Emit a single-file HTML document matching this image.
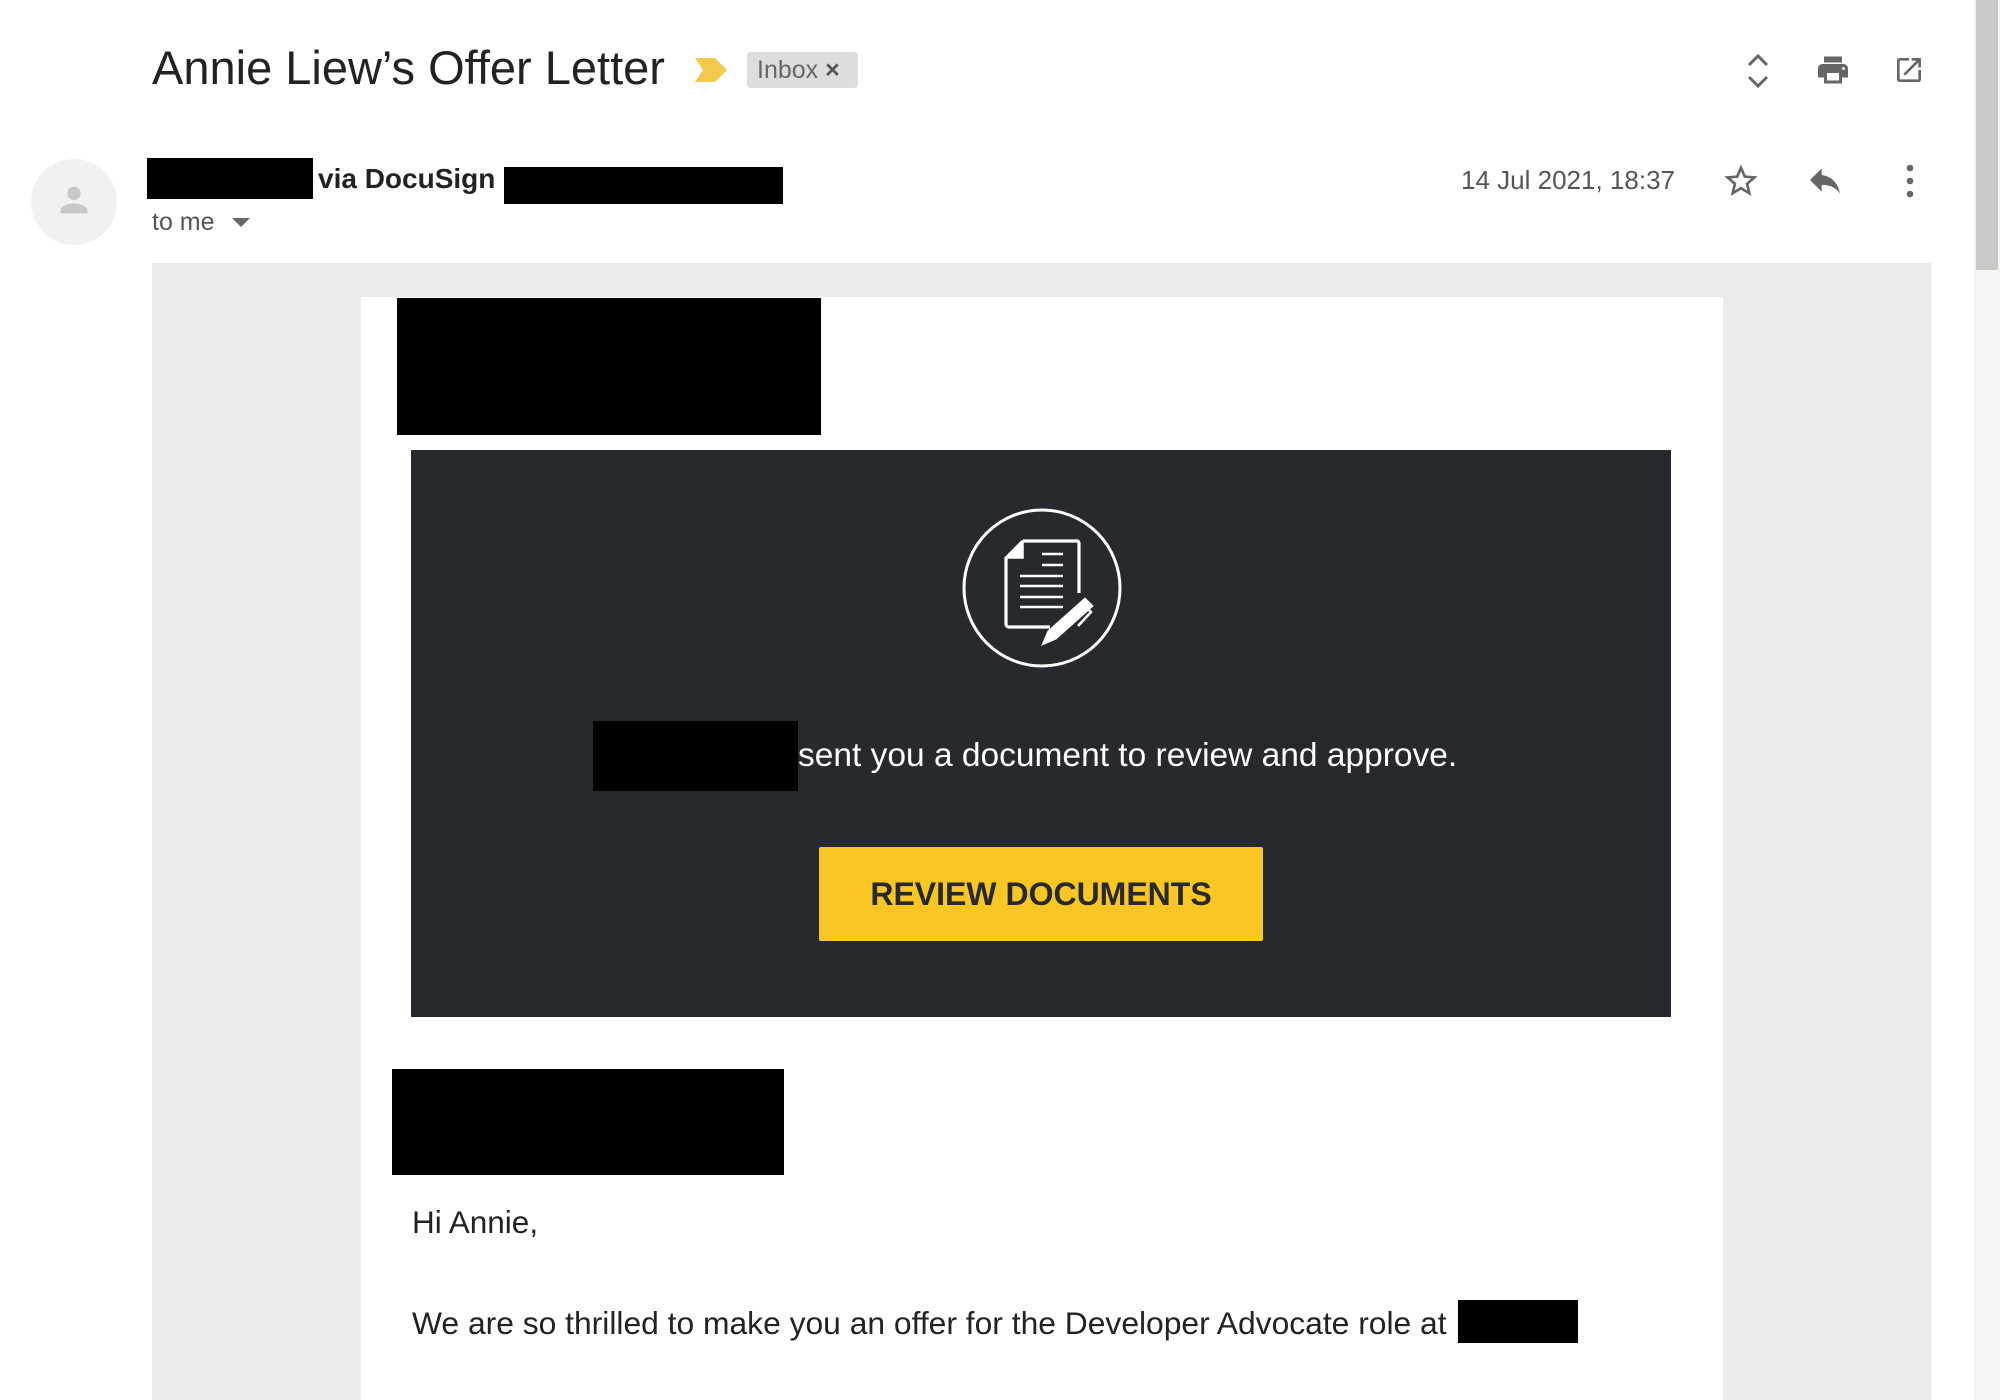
<!DOCTYPE html>
<html><head><meta charset="utf-8"><style>
body{margin:0;width:2000px;height:1400px;overflow:hidden;background:#fff;font-family:"Liberation Sans",Arial,sans-serif;position:relative}
.a{position:absolute}
.blk{position:absolute;background:#000}
</style></head><body>
<div class="a" style="left:1974px;top:0;width:26px;height:1400px;background:#f4f4f4"></div>
<div class="a" style="left:1976px;top:0;width:22px;height:270px;background:#c9c9c5"></div>

<div class="a" style="left:152px;top:40px;font-size:47px;color:#222;white-space:nowrap">Annie Liew’s Offer Letter</div>
<svg class="a" style="left:693px;top:56px" width="36" height="28" viewBox="0 0 36 28"><path d="M2 2H22L34 14L22 26H2L10 14Z" fill="#f2c94c"/></svg>
<div class="a" style="left:747px;top:52px;width:111px;height:36px;background:#ddd;border-radius:4px;font-size:25px;color:#666;line-height:36px;text-indent:10px">Inbox <span style="font-weight:bold;color:#555">×</span></div>

<svg class="a" style="left:1744px;top:52px" width="28" height="38" viewBox="0 0 28 38" fill="none" stroke="#666" stroke-width="3"><path d="M5 13L14 4L23 13M5 25L14 34L23 25"/></svg>
<svg class="a" style="left:1815px;top:52px" width="36" height="36" viewBox="0 0 24 24"><path fill="#666" d="M19 8H5c-1.66 0-3 1.34-3 3v6h4v4h12v-4h4v-6c0-1.66-1.340-3-3-3zm-3 11H8v-5h8v5zm3-7c-.55 0-1-.45-1-1s.45-1 1-1 1 .45 1 1-.45 1-1 1zm-1-9H6v4h12V3z"/></svg>
<svg class="a" style="left:1893px;top:54px" width="32" height="32" viewBox="0 0 24 24"><path fill="#666" d="M19 19H5V5h7V3H5a2 2 0 00-2 2v14a2 2 0 002 2h14c1.1 0 2-.9 2-2v-7h-2v7zM14 3v2h3.59l-9.830 9.83 1.41 1.41L19 6.41V10h2V3h-7z"/></svg>

<div class="a" style="left:31px;top:159px;width:86px;height:86px;border-radius:50%;background:#f1f1f1"></div>
<svg class="a" style="left:54px;top:180px" width="40" height="40" viewBox="0 0 24 24"><path fill="#c8c8c8" d="M12 12c2.2 0 4-1.8 4-4s-1.8-4-4-4-4 1.8-4 4 1.8 4 4 4zm0 2c-2.7 0-8 1.3-8 4v2h16v-2c0-2.7-5.3-4-8-4z"/></svg>

<div class="blk" style="left:147px;top:158px;width:166px;height:41px"></div>
<div class="a" style="left:318px;top:163px;font-size:28px;font-weight:bold;color:#222">via DocuSign</div>
<div class="blk" style="left:504px;top:167px;width:279px;height:37px"></div>
<div class="a" style="left:152px;top:208px;font-size:25px;color:#555">to me</div>
<svg class="a" style="left:232px;top:218px" width="18" height="10"><path d="M0 0H18L9 9Z" fill="#666"/></svg>

<div class="a" style="left:1375px;top:165px;width:300px;text-align:right;font-size:26px;color:#555">14 Jul 2021, 18:37</div>
<svg class="a" style="left:1721px;top:161px" width="40" height="40" viewBox="0 0 24 24"><path fill="#666" d="M22 9.24l-7.19-.62L12 2 9.19 8.63 2 9.24l5.46 4.73L5.82 21 12 17.27 18.18 21l-1.63-7.03L22 9.24zM12 15.4l-3.76 2.27 1-4.28-3.32-2.88 4.38-.38L12 6.1l1.71 4.040 4.38.38-3.32 2.88 1 4.28L12 15.4z"/></svg>
<svg class="a" style="left:1805px;top:160px" width="40" height="40" viewBox="0 0 24 24"><path fill="#666" d="M10 9V5l-7 7 7 7v-4.1c5 0 8.5 1.6 11 5.1-1-5-4-10-11-11z"/></svg>
<svg class="a" style="left:1900px;top:162px" width="20" height="38"><circle cx="10" cy="6" r="3.3" fill="#666"/><circle cx="10" cy="19" r="3.3" fill="#666"/><circle cx="10" cy="32" r="3.3" fill="#666"/></svg>

<div class="a" style="left:152px;top:263px;width:1779px;height:1137px;background:#ebebeb"></div>
<div class="a" style="left:361px;top:297px;width:1362px;height:1103px;background:#fff"></div>
<div class="blk" style="left:397px;top:298px;width:424px;height:137px"></div>

<div class="a" style="left:411px;top:450px;width:1260px;height:567px;background:#262a2e"></div>
<svg class="a" style="left:961px;top:507px" width="162" height="162" viewBox="0 0 162 162" fill="none" stroke="#fff">
<circle cx="81" cy="81" r="78" stroke-width="3"/>
<path d="M62 34H116a2 2 0 012 2V86M89 120H48a3 3 0 01-3-3V51L62 34" stroke-width="3.2"/>
<path d="M45 51H62V34Z" fill="#fff" stroke-width="1.5"/>
<path d="M81 47H102M81 58H102M59 69H102M59 79H102M59 90H102M59 100H102" stroke-width="2.5"/>
<path d="M81 138L87 124L124 91L132 99L95 132Z" fill="#fff" stroke-width="1"/>
<path d="M124 99L130 105L117 119" stroke-width="2.5"/>
</svg>
<div class="blk" style="left:593px;top:721px;width:205px;height:70px"></div>
<div class="a" style="left:798px;top:737px;font-size:33.5px;color:#fff;white-space:nowrap">sent you a document to review and approve.</div>
<div class="a" style="left:819px;top:847px;width:444px;height:94px;background:#f9c623;border-radius:2px;text-align:center;line-height:94px;font-size:32px;font-weight:bold;color:#262a2e">REVIEW DOCUMENTS</div>

<div class="blk" style="left:392px;top:1069px;width:392px;height:106px"></div>
<div class="a" style="left:412px;top:1204px;font-size:31.5px;color:#222">Hi Annie,</div>
<div class="a" style="left:412px;top:1305px;font-size:31.8px;color:#222;white-space:nowrap">We are so thrilled to make you an offer for the Developer Advocate role at</div>
<div class="blk" style="left:1458px;top:1300px;width:120px;height:43px"></div>
</body></html>
